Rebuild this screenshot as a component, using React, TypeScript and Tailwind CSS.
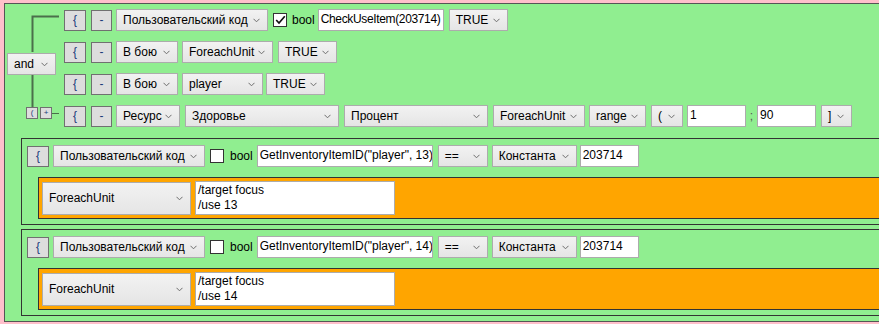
import { FC, ReactNode } from 'react';

const font = { fontFamily: '"Liberation Sans", Arial, sans-serif' };

const Chevron: FC = () => (
  <svg width="7" height="5" viewBox="0 0 7 5" className="shrink-0">
    <path d="M0.5 0.8 L3.5 3.8 L6.5 0.8" fill="none" stroke="#6d6d6d" strokeWidth="1" />
  </svg>
);

interface SelProps {
  w: string;
  label: string;
  className?: string;
  tall?: boolean;
}

const Sel: FC<SelProps> = ({ w, label, className = '', tall }) => (
  <div
    className={`${w} ${tall ? 'h-[33px]' : 'h-[22px]'} ${className} flex shrink-0 items-center justify-between border border-[#acacac] bg-linear-to-b from-[#f2f2f2] to-[#e5e5e5] pl-[6px] pr-[7px] text-[12px] text-black`}
  >
    <span className="whitespace-nowrap leading-none">{label}</span>
    <Chevron />
  </div>
);

const Field: FC<{ w: string; className?: string; children: ReactNode }> = ({ w, className = '', children }) => (
  <div
    className={`${w} ${className} h-[22px] shrink-0 overflow-hidden whitespace-nowrap border border-[#acacac] bg-white pl-[2px] pt-[2px] text-[12px] leading-[15px] text-black`}
  >
    {children}
  </div>
);

const Btn: FC<{ label: string; className?: string; w?: string }> = ({ label, className = '', w = 'w-[22px]' }) => (
  <div
    className={`${w} ${className} flex h-[21px] shrink-0 items-center justify-center border border-[#707070] bg-[#dddddd] text-[12px] text-[#1a3a7a]`}
  >
    {label}
  </div>
);

const Check: FC<{ checked?: boolean; className?: string }> = ({ checked, className = '' }) => (
  <div className={`${className} flex h-[14px] w-[14px] shrink-0 items-center justify-center border border-[#333] bg-white`}>
    {checked ? (
      <svg width="11" height="10" viewBox="0 0 11 10">
        <path d="M1.2 5 L4 8 L9.8 1.2" fill="none" stroke="#111" strokeWidth="1.7" />
      </svg>
    ) : null}
  </div>
);

const Block: FC<{ id: string; slot: string }> = ({ id, slot }) => (
  <div className="flex flex-col border-y border-l border-[#333] pb-[5px] pt-[6px]">
    <div className="ml-[5px] flex h-[22px] items-center">
      <Btn label="{" />
      <Sel w="w-[152px]" label="Пользовательский код" className="ml-[4px]" />
      <Check className="ml-[5px]" />
      <span className="ml-[6px] text-[12px] text-black">bool</span>
      <Field w="w-[176px]" className="ml-[4px] -mt-[1px]">
        GetInventoryItemID("player", {id})
      </Field>
      <Sel w="w-[50px]" label="==" className="ml-[5px]" />
      <Sel w="w-[85px]" label="Константа" className="ml-[4px]" />
      <Field w="w-[59px]" className="ml-[3px] -mt-[1px]">
        203714
      </Field>
    </div>
    <div className="ml-[16px] mt-[10px] flex items-center border-y border-l border-[#333] bg-[#ffa500] py-[3px] pl-[3px]">
      <Sel w="w-[149px]" label="ForeachUnit" tall />
      <div className="ml-[4px] h-[34px] w-[200px] border border-[#acacac] bg-white pl-[2px] pt-[1px] text-[12px] leading-[15px] text-black">
        <div>/target focus</div>
        <div>/use {slot}</div>
      </div>
    </div>
  </div>
);

const App: FC = () => {
  return (
    <div className="h-[324px] w-[879px] overflow-hidden bg-[#ffc0cb] pl-[4px] pt-[3px]" style={font}>
      <div className="flex w-[900px] flex-col border-y border-l border-[#555] bg-[#90ee90] pb-[5px]">
        <div className="flex pt-[5px]">
          <div className="relative h-[118px] w-[54px] shrink-0">
            <svg className="absolute left-0 top-0" width="54" height="118">
              <path d="M27.5 43 V7.5 H54" fill="none" stroke="#4b6f4b" strokeWidth="2" />
              <path d="M27.5 65 V98" fill="none" stroke="#4b6f4b" strokeWidth="2" />
              <path d="M47 104.5 H54" fill="none" stroke="#4b6f4b" strokeWidth="1" />
            </svg>
            <Sel w="w-[49px]" label="and" className="relative ml-[2px] mt-[44px]" />
            <div className="absolute left-[21px] top-[98px] flex gap-[2px]">
              <div className="flex h-[12px] w-[12px] items-center justify-center border border-[#707070] bg-[#dddddd] text-[8px] leading-none text-[#1a3a7a]">
                (
              </div>
              <div className="flex h-[12px] w-[12px] items-center justify-center border border-[#707070] bg-[#dddddd] text-[8px] leading-none text-[#1a3a7a]">
                +
              </div>
            </div>
          </div>
          <div className="ml-[5px] flex flex-col gap-[10px]">
            <div className="flex h-[22px] items-center">
              <Btn label="{" />
              <Btn label="-" w="w-[21px]" className="ml-[5px]" />
              <Sel w="w-[152px]" label="Пользовательский код" className="ml-[4px]" />
              <Check checked className="ml-[5px]" />
              <span className="ml-[5px] text-[12px] text-black">bool</span>
              <Field w="w-[126px]" className="ml-[3px] -mt-[1px] tracking-[-0.35px]">
                CheckUseItem(203714)
              </Field>
              <Sel w="w-[59px]" label="TRUE" className="ml-[5px]" />
            </div>
            <div className="flex h-[22px] items-center">
              <Btn label="{" />
              <Btn label="-" w="w-[21px]" className="ml-[5px]" />
              <Sel w="w-[62px]" label="В бою" className="ml-[4px]" />
              <Sel w="w-[91px]" label="ForeachUnit" className="ml-[4px]" />
              <Sel w="w-[59px]" label="TRUE" className="ml-[5px]" />
            </div>
            <div className="flex h-[22px] items-center">
              <Btn label="{" />
              <Btn label="-" w="w-[21px]" className="ml-[5px]" />
              <Sel w="w-[62px]" label="В бою" className="ml-[4px]" />
              <Sel w="w-[81px]" label="player" className="ml-[4px]" />
              <Sel w="w-[59px]" label="TRUE" className="ml-[3px]" />
            </div>
            <div className="flex h-[22px] items-center">
              <Btn label="{" />
              <Btn label="-" w="w-[21px]" className="ml-[5px]" />
              <Sel w="w-[64px]" label="Ресурс" className="ml-[4px]" />
              <Sel w="w-[154px]" label="Здоровье" className="ml-[5px]" />
              <Sel w="w-[144px]" label="Процент" className="ml-[5px]" />
              <Sel w="w-[92px]" label="ForeachUnit" className="ml-[5px]" />
              <Sel w="w-[57px]" label="range" className="ml-[4px]" />
              <Sel w="w-[32px]" label="(" className="ml-[5px]" />
              <Field w="w-[59px]" className="ml-[4px] -mt-[1px]">
                1
              </Field>
              <span className="w-[11px] text-center text-[12px] text-[#555]">;</span>
              <Field w="w-[59px]" className="-mt-[1px]">
                90
              </Field>
              <Sel w="w-[31px]" label="]" className="ml-[5px]" />
            </div>
          </div>
        </div>
        <div className="ml-[16px] mt-[11px] flex flex-col gap-[4px]">
          <Block id="13" slot="13" />
          <Block id="14" slot="14" />
        </div>
      </div>
    </div>
  );
};

export default App;
